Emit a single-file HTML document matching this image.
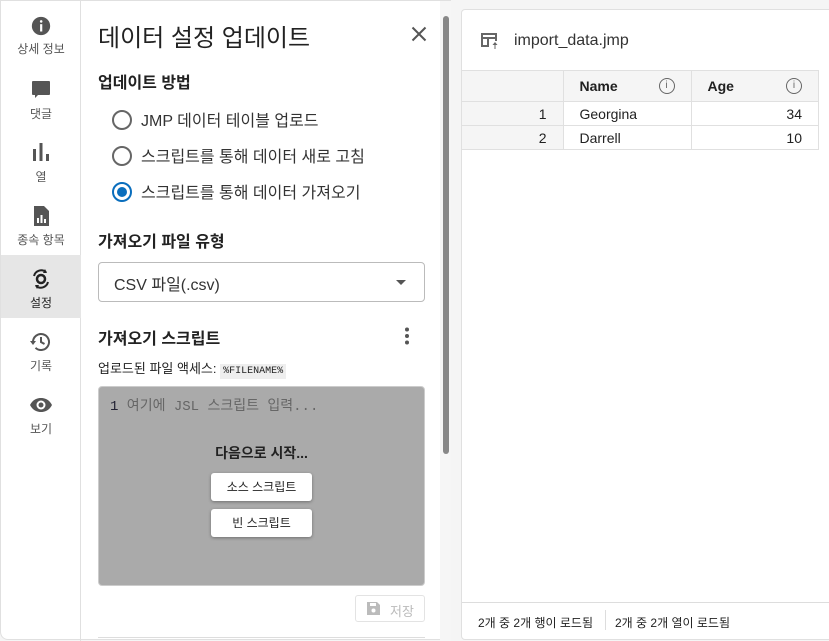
<!DOCTYPE html><html><head><meta charset="utf-8"><style>
*{box-sizing:border-box}body{margin:0;width:829px;height:640px;overflow:hidden;background:#f5f5f5;font-family:"Liberation Sans","Noto Sans CJK KR",sans-serif;color:#212121;position:relative}
.outer{position:absolute;left:0;top:0;width:451px;height:640px;background:#fff;border:1px solid #e0e0e0;border-radius:0 0 0 8px}
.side{position:absolute;left:0;top:0;width:80px;height:640px;border-right:1px solid #e0e0e0}
.it{position:absolute;left:0;width:80px;text-align:center;font-size:12px;color:#555}
.it svg{display:block;margin:0 auto 3px}
.abs{position:absolute}
.radio{position:absolute;left:111px;width:20px;height:20px;border:2px solid #666;border-radius:50%}
.rl{position:absolute;left:140px;font-size:16px;color:#333}
.btn{position:absolute;left:210px;width:101px;height:28px;background:#fff;border-radius:3px;box-shadow:0 1px 3px rgba(0,0,0,.35);font-size:12px;text-align:center;line-height:28px;color:#222}
.card{position:absolute;left:461px;top:9px;width:380px;height:631px;background:#fff;border:1px solid #e0e0e0;border-radius:4px}
td{border:1px solid #e0e0e0;font-size:14px;padding:0 16px;height:24px}
.ii{float:right;width:16px;height:16px;border:1.4px solid #666;border-radius:50%;font-size:10px;text-align:center;line-height:13px;color:#666;font-weight:normal}
</style></head><body>
<div class="outer">
<div class="side">
<div class="it" style="top:14px"><svg width="22" height="22" viewBox="0 0 24 24"><circle cx="12" cy="12" r="10" fill="#555"/><rect x="11" y="10" width="2.4" height="8" fill="#fff"/><circle cx="12.2" cy="7" r="1.4" fill="#fff"/></svg>상세 정보</div>
<div class="it" style="top:77px"><svg width="24" height="24" viewBox="0 0 24 24"><path d="M4 3h16a1 1 0 0 1 1 1v12a1 1 0 0 1-1 1H9l-3 3v-3H4a1 1 0 0 1-1-1V4a1 1 0 0 1 1-1z" fill="#555"/></svg>댓글</div>
<div class="it" style="top:140px"><svg width="24" height="24" viewBox="0 0 24 24"><rect x="4" y="8" width="3" height="12" fill="#555"/><rect x="10.5" y="2" width="3" height="18" fill="#555"/><rect x="17" y="13" width="3" height="7" fill="#555"/></svg>열</div>
<div class="it" style="top:203px"><svg width="24" height="24" viewBox="0 0 24 24"><path d="M5 2h10l5 5v15H5z" fill="#555"/><rect x="8" y="14" width="2" height="5" fill="#fff"/><rect x="11.5" y="11" width="2" height="8" fill="#fff"/><rect x="15" y="15" width="2" height="4" fill="#fff"/></svg>종속 항목</div>
<div class="it" style="top:254px;height:63px;background:#e6e6e6;padding-top:12px;color:#222"><svg width="24" height="24" viewBox="0 0 24 24"><circle cx="12" cy="12" r="4" fill="none" stroke="#222" stroke-width="2.5"/><path d="M5 9a7.5 7.5 0 0 1 12-4M19 15a7.5 7.5 0 0 1-12 4" fill="none" stroke="#222" stroke-width="2"/><path d="M16 2l2 4-4 0zM8 22l-2-4 4 0z" fill="#222"/></svg>설정</div>
<div class="it" style="top:329px"><svg width="24" height="24" viewBox="0 0 24 24"><path d="M4 12a8 8 0 1 1 2.5 5.8" fill="none" stroke="#555" stroke-width="2"/><path d="M1 11h6l-3 4z" fill="#555"/><path d="M12 7v5l3.5 2" fill="none" stroke="#555" stroke-width="2"/></svg>기록</div>
<div class="it" style="top:392px"><svg width="24" height="24" viewBox="0 0 24 24"><path d="M1 12c3-6 8-7 11-7s8 1 11 7c-3 6-8 7-11 7s-8-1-11-7z" fill="#555"/><circle cx="12" cy="12" r="4.5" fill="#fff"/><circle cx="12" cy="12" r="2.5" fill="#555"/></svg>보기</div>
</div>
<div class="abs" style="left:97px;top:17px;font-size:24px;color:#222">데이터 설정 업데이트</div>
<svg class="abs" style="left:410px;top:25px" width="16" height="16" viewBox="0 0 16 16"><path d="M1.5 1.5l13 13M14.5 1.5l-13 13" stroke="#555" stroke-width="2"/></svg>
<div class="abs" style="left:97px;top:68px;font-size:16px;font-weight:bold;color:#222">업데이트 방법</div>
<div class="radio" style="top:109px"></div><div class="rl" style="top:106px">JMP 데이터 테이블 업로드</div>
<div class="radio" style="top:145px"></div><div class="rl" style="top:142px">스크립트를 통해 데이터 새로 고침</div>
<div class="radio" style="top:181px;border-color:#0a6ebd"><div style="position:absolute;left:3px;top:3px;width:10px;height:10px;border-radius:50%;background:#0a6ebd"></div></div><div class="rl" style="top:178px">스크립트를 통해 데이터 가져오기</div>
<div class="abs" style="left:97px;top:227px;font-size:16px;font-weight:bold;color:#222">가져오기 파일 유형</div>
<div class="abs" style="left:97px;top:261px;width:327px;height:40px;border:1px solid #bbb;border-radius:4px;font-size:16px;padding:8px 15px;color:#333">CSV 파일(.csv)<div style="position:absolute;right:18px;top:17px;border:5px solid transparent;border-top-color:#555;border-bottom:0"></div></div>
<div class="abs" style="left:97px;top:324px;font-size:16px;font-weight:bold;color:#222">가져오기 스크립트</div>
<svg class="abs" style="left:402px;top:326px" width="8" height="18"><circle cx="4" cy="2.5" r="2" fill="#555"/><circle cx="4" cy="9" r="2" fill="#555"/><circle cx="4" cy="15.5" r="2" fill="#555"/></svg>
<div class="abs" style="left:97px;top:357px;font-size:13px;color:#222">업로드된 파일 액세스: <span style="background:#eee;font-family:'Liberation Mono',monospace;font-size:10px;padding:2px 3px">%FILENAME%</span></div>
<div class="abs" style="left:97px;top:385px;width:327px;height:200px;background:#aaa;border:1px solid #ccc;border-radius:4px">
<div style="position:absolute;left:11px;top:8px;font-family:'Liberation Mono','Noto Sans CJK KR',monospace;font-size:14px;color:#666"><span style="color:#223">1</span> 여기에 JSL 스크립트 입력...</div>
<div style="position:absolute;left:0;width:100%;top:56px;text-align:center;font-size:14px;font-weight:bold;color:#222">다음으로 시작...</div>
</div>
<div class="btn" style="top:472px">소스 스크립트</div>
<div class="btn" style="top:508px">빈 스크립트</div>
<div class="abs" style="left:354px;top:594px;width:70px;height:27px;border:1px solid #e3e3e3;border-radius:3px;font-size:13px;color:#bbb;padding:5px 0 0 34px">저장<svg style="position:absolute;left:11px;top:6px" width="13" height="13"><path d="M0 0h10l3 3v10H0z" fill="#bbb"/><rect x="3" y="1" width="6" height="3" fill="#fff"/><circle cx="6.5" cy="8.5" r="2" fill="#fff"/></svg></div>
<div class="abs" style="left:97px;top:636px;width:327px;height:1px;background:#ddd"></div>
<div class="abs" style="left:439px;top:0;width:11px;height:640px;background:#f6f6f6"></div>
<div class="abs" style="left:442px;top:15px;width:6px;height:438px;background:#888;border-radius:3px"></div>
</div>
<div class="card">
<svg class="abs" style="left:18px;top:22px" width="20" height="18" viewBox="0 0 20 18"><path d="M1 1h16v8h-2V7H9v8H1zM3 3v2h12V3zM3 7v6h4V7z" fill="#666" fill-rule="evenodd"/><path d="M15 10l-2.5 3h2v4h1v-4h2z" fill="#666"/></svg>
<div class="abs" style="left:52px;top:22px;font-size:16px;color:#333">import_data.jmp</div>
<table style="position:absolute;left:0;top:60px;border-collapse:collapse;width:357px">
<tr style="background:#f5f5f5;height:31px"><td style="width:101px;border-left:0"></td><td style="font-weight:bold;width:128px">Name<span class="ii">i</span></td><td style="font-weight:bold">Age<span class="ii">i</span></td></tr>
<tr><td style="text-align:right;background:#f5f5f5;border-left:0">1</td><td>Georgina</td><td style="text-align:right">34</td></tr>
<tr><td style="text-align:right;background:#f5f5f5;border-left:0">2</td><td>Darrell</td><td style="text-align:right">10</td></tr>
</table>
<div class="abs" style="left:0;top:592px;width:100%;height:1px;background:#ddd"></div>
<div class="abs" style="left:16px;top:604px;font-size:12px;color:#222">2개 중 2개 행이 로드됨</div>
<div class="abs" style="left:143px;top:600px;width:1px;height:20px;background:#ddd"></div>
<div class="abs" style="left:153px;top:604px;font-size:12px;color:#222">2개 중 2개 열이 로드됨</div>
</div>
</body></html>
